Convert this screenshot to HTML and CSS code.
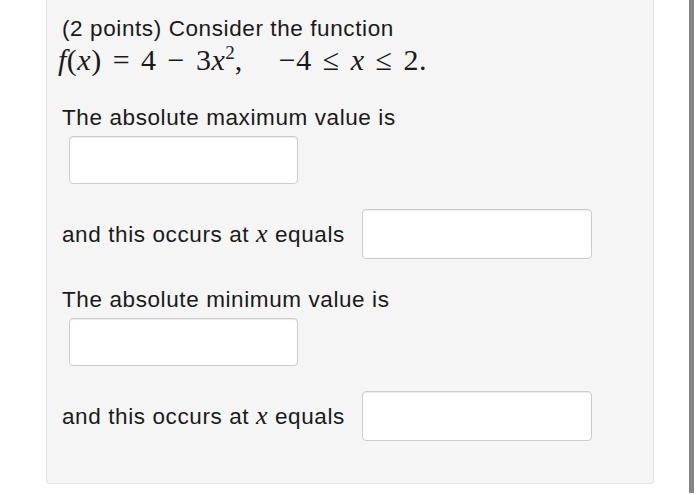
FILE: index.html
```
<!DOCTYPE html>
<html>
<head>
<meta charset="utf-8">
<link rel="stylesheet" href="styles.css">
</head>
<body>
<div class="page">
  <div class="panel">
    <p class="intro">(2 points) Consider the function</p>
    <p class="math"><i>f</i>(<i>x</i>) = 4 − 3<i>x</i><sup>2</sup>,<span class="gap"></span>−4 ≤ <i>x</i> ≤ 2.</p>
    <p class="label first">The absolute maximum value is</p>
    <input class="box" type="text">
    <div class="row">
      <span class="label">and this occurs at <i class="var">x</i> equals</span>
      <input class="box" type="text">
    </div>
    <p class="label second">The absolute minimum value is</p>
    <input class="box" type="text">
    <div class="row">
      <span class="label">and this occurs at <i class="var">x</i> equals</span>
      <input class="box" type="text">
    </div>
  </div>
  <div class="bar"></div>
</div>
</body>
</html>
```
FILE: styles.css
```
html, body {
  margin: 0;
  padding: 0;
  background: #ffffff;
}
.page {
  display: flex;
  align-items: flex-start;
  padding-left: 46px;
}
.panel {
  box-sizing: border-box;
  width: 608px;
  height: 484px;
  background: #f5f5f5;
  border: 1px solid #e3e3e3;
  border-top: none;
  border-radius: 0 0 4px 4px;
  padding: 15px 0 0 15px;
  font-family: "Liberation Sans", Arial, sans-serif;
  font-size: 22.5px;
  letter-spacing: 0.6px;
  color: #1a1a1a;
}
p {
  margin: 0;
}
.intro {
  line-height: 28px;
}
.math {
  font-family: "Liberation Serif", "Times New Roman", serif;
  font-size: 30px;
  letter-spacing: 0.5px;
  word-spacing: 3px;
  line-height: 34px;
  margin-left: -4px;
}
.math sup {
  font-size: 19px;
  line-height: 0;
  letter-spacing: 0;
}
.gap {
  display: inline-block;
  width: 36px;
}
.label {
  line-height: 28px;
}
.first {
  margin-top: 27px;
}
.second {
  margin-top: 27px;
}
.var {
  font-family: "Liberation Serif", "Times New Roman", serif;
  font-size: 26px;
}
.box {
  display: block;
  box-sizing: border-box;
  width: 229px;
  height: 48px;
  margin: 4px 0 0 7px;
  padding: 0;
  background: #ffffff;
  border: 1px solid #cccccc;
  border-radius: 4px;
  box-shadow: inset 0 1px 1px rgba(0, 0, 0, 0.08);
}
.row {
  display: flex;
  align-items: center;
  gap: 17px;
  margin-top: 25px;
}
.row .box {
  margin: 0;
  width: 230px;
  height: 50px;
}
.row + .label {
  margin-top: 27px;
}
.bar {
  width: 5px;
  height: 493px;
  margin-left: 35px;
  background: #858585;
}
```
